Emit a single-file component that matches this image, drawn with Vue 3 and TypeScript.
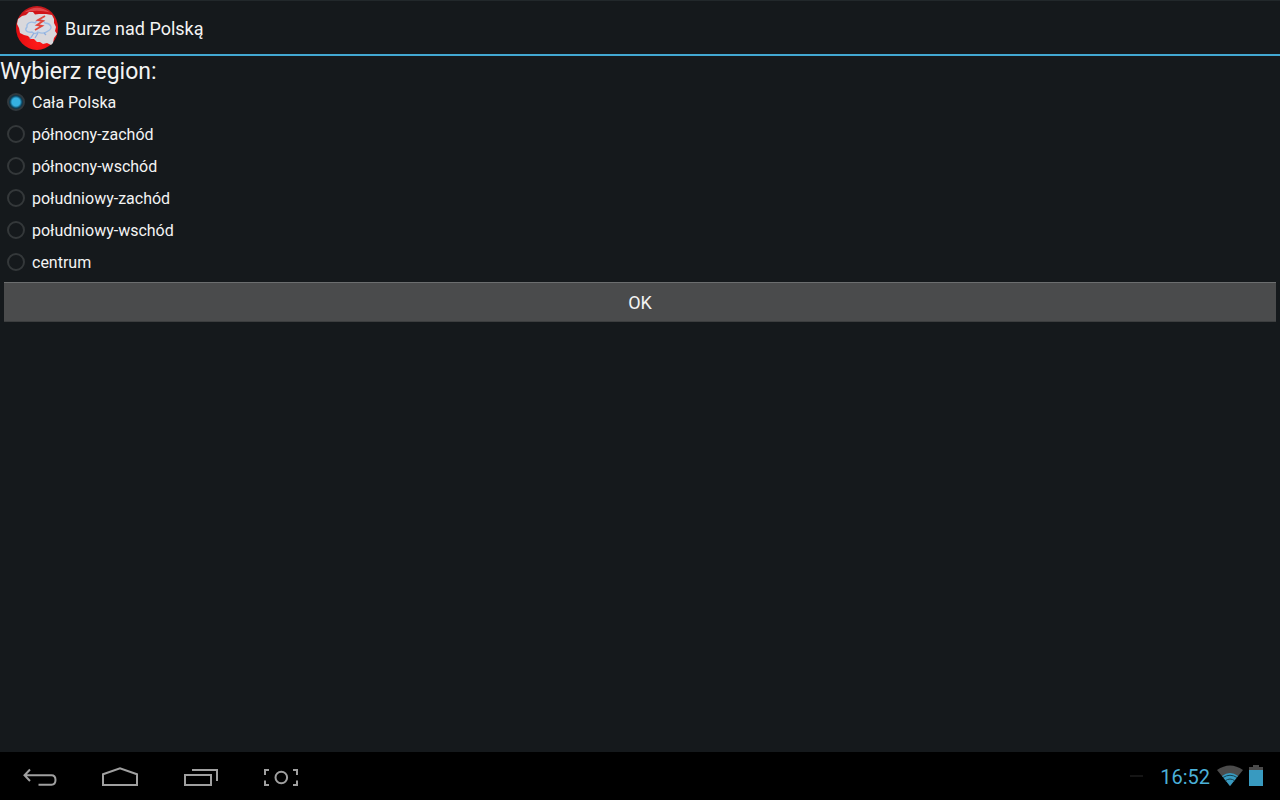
<script setup lang="ts">
import { ref } from 'vue'

const regions: string[] = [
  'Cała Polska',
  'północny-zachód',
  'północny-wschód',
  'południowy-zachód',
  'południowy-wschód',
  'centrum',
]
const selected = ref(regions[0])
</script>

<template>
  <div class="screen">
    <header class="action-bar">
      <svg class="logo" viewBox="0 0 44 44" aria-hidden="true">
        <defs>
          <radialGradient id="ball" cx="50%" cy="85%" r="85%">
            <stop offset="0" stop-color="#ff1a1a" />
            <stop offset="0.6" stop-color="#e30c10" />
            <stop offset="1" stop-color="#c4191c" />
          </radialGradient>
        </defs>
        <ellipse cx="22" cy="22" rx="21" ry="22" fill="url(#ball)" />
        <path d="M9 6.5Q22 -3 35 6.5Q22 3 9 6.5Z" fill="#f0686a" opacity="0.6" />
        <path
          d="M3 13L7 10L11 9L14 6L18 6L20 8.500L24 8L31 8L37 9L39 13L39 17L41 21L40 25L42 28L39 32L38 37L36 39L32 37L28 38L25 36L22 36L19 33L16 33L13 30L9 29L5 27L4 22L2 18Z"
          fill="#d9d8dc"
        />
        <path
          d="M17 26C12 27 9 24 12 21C11 17 16 15 20 17C22 13 28 13 30 17C35 17 39 22 33 25C29 28 25 27 23 26C21 28 19 28 17 26Z"
          fill="#d5dbe6"
          stroke="#9dbce4"
          stroke-width="1.3"
        />
        <path
          d="M19 27L15 33M23 27L20 32M29 27L31 29"
          stroke="#8fadde"
          stroke-width="1.3"
          fill="none"
        />
        <path
          d="M30 10L23 14L28 15L22 19L27 20L20 24"
          fill="none"
          stroke="#e2453b"
          stroke-width="1.8"
        />
      </svg>
      <h1 class="title">Burze nad Polską</h1>
    </header>

    <main class="content">
      <form @submit.prevent>
        <fieldset class="group">
          <legend class="prompt">Wybierz region:</legend>
          <label v-for="region in regions" :key="region" class="option">
            <input v-model="selected" class="radio" type="radio" name="region" :value="region" />
            <span>{{ region }}</span>
          </label>
        </fieldset>
        <button class="ok" type="submit">OK</button>
      </form>
    </main>

    <footer class="system-bar">
      <nav class="keys">
        <button class="key" type="button" aria-label="Wstecz">
          <svg viewBox="0 0 80 48">
            <path d="M30 17.5L24.500 23.200L30 29M25 23.200H51.500Q55.500 23.200 55.500 28Q55.500 32.700 51.500 32.700H38.500" />
          </svg>
        </button>
        <button class="key" type="button" aria-label="Ekran główny">
          <svg viewBox="0 0 80 48">
            <path d="M23 22.300L40 16.300L57 22.300V33H23Z" />
          </svg>
        </button>
        <button class="key" type="button" aria-label="Ostatnie aplikacje">
          <svg viewBox="0 0 80 48">
            <path d="M25 23H51V33H25ZM32 18H57V29" />
          </svg>
        </button>
        <button class="key" type="button" aria-label="Zrzut ekranu">
          <svg viewBox="0 0 80 48">
            <path d="M29 18H25V23M25 28.500V33H29M53 18H57V23M57 28.500V33H53" />
            <circle cx="41.300" cy="25.500" r="5.800" />
          </svg>
        </button>
      </nav>
      <div class="status">
        <span class="dash"></span>
        <time class="clock">16:52</time>
        <svg class="wifi" viewBox="0 0 26 22" aria-hidden="true">
          <path d="M13 21L0 5Q13 -4 26 5Z" fill="#4b4b4b" />
          <path d="M13 21L5 11Q13 5 21 11Z" fill="#389ac0" />
          <path d="M6 12.500Q13 8 20 12.500M8 16Q13 12 18 16" fill="none" stroke="#16414f" stroke-width="1" />
        </svg>
        <svg class="battery" viewBox="0 0 14 22" aria-hidden="true">
          <path d="M4 0H10V2H14V6H0V2H4Z" fill="#4b4b4b" />
          <rect y="5" width="14" height="16" fill="#389ac0" />
        </svg>
      </div>
    </footer>
  </div>
</template>

<style>
body {
  margin: 0;
  background: #15191c;
}
</style>

<style scoped>
.screen {
  display: flex;
  flex-direction: column;
  min-height: 100vh;
  background: #15191c;
  color: #f3f3f3;
  font-family: Roboto, "Noto Sans", sans-serif;
}

.action-bar {
  display: flex;
  align-items: center;
  gap: 6px;
  box-sizing: border-box;
  height: 56px;
  padding-left: 15px;
  border-top: 1px solid #22282b;
  border-bottom: 2px solid #42a8d2;
}

.logo {
  width: 44px;
  height: 44px;
}

.title {
  margin: 0;
  padding-top: 2px;
  font-size: 18px;
  font-weight: 400;
  line-height: 24px;
}

.content {
  flex: 1;
}

.group {
  display: flex;
  flex-direction: column;
  min-width: 0;
  margin: 0;
  padding: 0;
  border: 0;
}

.prompt {
  padding: 2px 0 0;
  font-size: 23px;
  line-height: 28px;
}

.option {
  display: flex;
  align-items: center;
  gap: 7px;
  height: 32px;
  padding-left: 7px;
  font-size: 16px;
}

.radio {
  appearance: none;
  box-sizing: border-box;
  width: 18px;
  height: 18px;
  margin: 0;
  border: 2px solid #34383a;
  border-radius: 50%;
}

.radio:checked {
  border-color: #31393e;
  background: radial-gradient(circle, #35b1e2 4px, #0d4560 6px, #12222b 8px);
}

.ok {
  display: block;
  width: calc(100% - 8px);
  height: 40px;
  margin: 4px;
  padding: 0;
  border: 0;
  border-top: 1px solid #6c6e6f;
  border-bottom: 1px solid #3c3e3f;
  background: #4a4b4c;
  color: #f3f3f3;
  font-family: inherit;
  font-size: 18px;
}

.system-bar {
  display: flex;
  align-items: center;
  justify-content: space-between;
  height: 48px;
  background: #000;
}

.keys {
  display: flex;
}

.key {
  width: 80px;
  height: 48px;
  padding: 0;
  border: 0;
  background: none;
}

.key svg {
  display: block;
  width: 80px;
  height: 48px;
  fill: none;
  stroke: #a0a0a0;
  stroke-width: 2;
}

.status {
  display: flex;
  align-items: center;
  padding-right: 17px;
}

.dash {
  width: 13px;
  height: 2px;
  margin-right: 17px;
  background: #151515;
}

.clock {
  padding-top: 2px;
  margin-right: 7px;
  color: #4bb0d8;
  font-size: 20px;
}

.wifi {
  width: 26px;
  height: 22px;
  margin-right: 6px;
}

.battery {
  width: 14px;
  height: 22px;
}
</style>
